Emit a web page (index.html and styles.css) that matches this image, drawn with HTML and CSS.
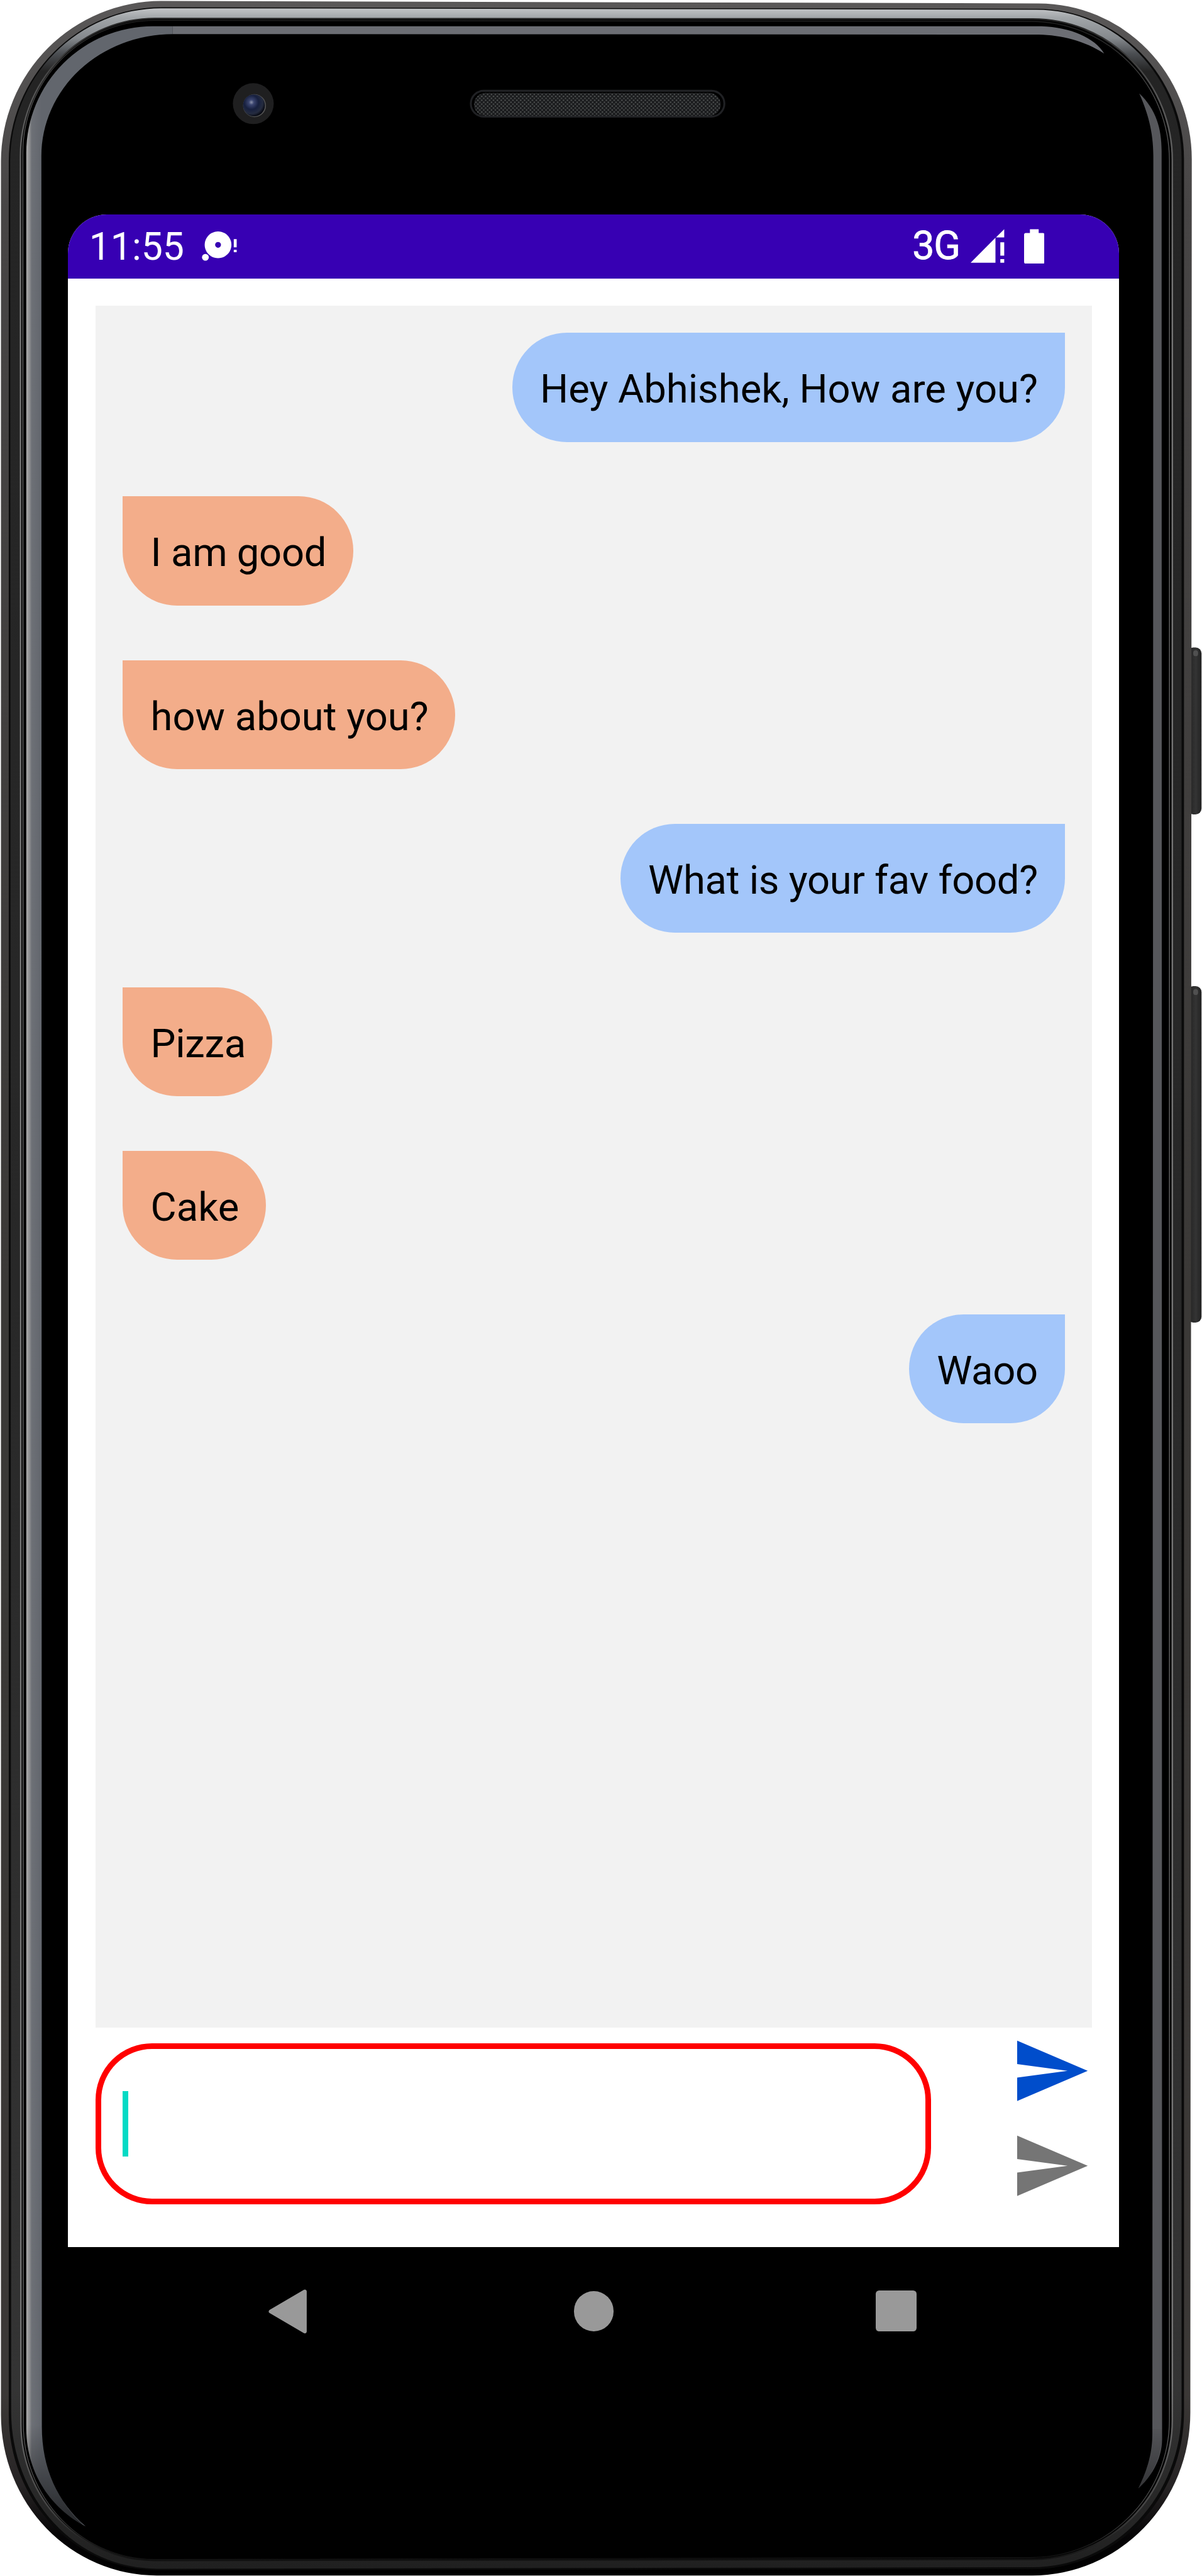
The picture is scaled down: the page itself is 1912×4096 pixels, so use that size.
FILE: index.html
```html
<!DOCTYPE html>
<html lang="en">
<head>
<meta charset="utf-8">
<title>Chat</title>
<link rel="stylesheet" href="styles.css">
</head>
<body>
<div class="phone">
  <svg class="frame" viewBox="0 0 2470 5292" preserveAspectRatio="none" aria-hidden="true">
    <defs>
      <linearGradient id="rim" gradientUnits="userSpaceOnUse" x1="0" y1="0" x2="0" y2="5292">
        <stop offset="0" stop-color="#5a5858"/><stop offset=".08" stop-color="#474545"/><stop offset=".5" stop-color="#3b3937"/><stop offset=".93" stop-color="#3b3836"/><stop offset=".965" stop-color="#262324"/><stop offset=".985" stop-color="#050405"/><stop offset="1" stop-color="#000"/>
      </linearGradient>
      <linearGradient id="bevel" gradientUnits="userSpaceOnUse" x1="0" y1="15" x2="0" y2="5280">
        <stop offset="0" stop-color="#c6c8ca"/><stop offset=".004" stop-color="#a2a6a9"/><stop offset=".012" stop-color="#85898d"/><stop offset=".018" stop-color="#4c4f53"/><stop offset=".025" stop-color="#242424"/><stop offset=".5" stop-color="#282828"/><stop offset=".93" stop-color="#343434"/><stop offset="1" stop-color="#202020"/>
      </linearGradient>
      <linearGradient id="hair" gradientUnits="userSpaceOnUse" x1="0" y1="36" x2="0" y2="5260">
        <stop offset="0" stop-color="#222"/><stop offset=".03" stop-color="#555"/><stop offset=".1" stop-color="#777"/><stop offset=".93" stop-color="#777"/><stop offset=".98" stop-color="#444"/><stop offset="1" stop-color="#111"/>
      </linearGradient>
      <linearGradient id="shineX" gradientUnits="userSpaceOnUse" x1="54" y1="0" x2="86" y2="0">
        <stop offset="0" stop-color="#aaa"/><stop offset=".2" stop-color="#8f9092"/><stop offset=".35" stop-color="#6d7076"/><stop offset="1" stop-color="#62666d"/>
      </linearGradient>
      <linearGradient id="fade" gradientUnits="userSpaceOnUse" x1="0" y1="4980" x2="0" y2="5195">
        <stop offset="0" stop-color="#000" stop-opacity="0"/><stop offset="1" stop-color="#000" stop-opacity=".65"/>
      </linearGradient>
      <linearGradient id="key" x1="0" y1="0" x2="1" y2="0">
        <stop offset="0" stop-color="#111"/><stop offset=".3" stop-color="#292929"/><stop offset=".6" stop-color="#343434"/><stop offset="1" stop-color="#202020"/>
      </linearGradient>
      <radialGradient id="lens" cx=".38" cy=".36" r=".65">
        <stop offset="0" stop-color="#8d94ad"/><stop offset=".18" stop-color="#3b4570"/><stop offset=".5" stop-color="#17203f"/><stop offset=".8" stop-color="#252c40"/><stop offset="1" stop-color="#090b14"/>
      </radialGradient>
      <pattern id="mesh" width="8" height="8" patternUnits="userSpaceOnUse">
        <rect width="8" height="8" fill="#1b1c1e"/><circle cx="2" cy="2" r="1.5" fill="#555857"/><circle cx="6" cy="6" r="1.5" fill="#555857"/>
      </pattern>
    </defs>
    <rect x="2440" y="1330" width="29" height="343" rx="12" fill="url(#key)"/>
    <rect x="2440" y="2026" width="29" height="691" rx="12" fill="url(#key)"/>
    <rect x="2452" y="1336" width="10" height="12" rx="5" fill="#505050"/>
    <rect x="2452" y="2032" width="10" height="12" rx="5" fill="#505050"/>
    <path fill="url(#rim)" d="M332 2L2134 7A315 320 0 0 1 2449 327L2446 4956A325 335 0 0 1 2121 5291L322 5291A320 330 0 0 1 2 4961L2 332A330 330 0 0 1 332 2Z"/>
    <path fill="#0a0a0a" d="M332 15L2130 18A303 309 0 0 1 2433 327L2433 4956A312 322 0 0 1 2121 5278L322 5280A304 319 0 0 1 18 4961L18 332A314 317 0 0 1 332 15Z"/>
    <path fill="url(#bevel)" d="M332 17L2130 20A298 307 0 0 1 2428 327L2428 4950A307 324 0 0 1 2121 5274L322 5277A299 322 0 0 1 23 4955L21 332A311 315 0 0 1 332 17Z"/>
    <path fill="#050505" stroke="url(#hair)" stroke-width="3" d="M318 38L2122 39A287 290 0 0 1 2409 329L2409 4972A290 286 0 0 1 2119 5258L318 5260A275 280 0 0 1 43 4980L42 320A276 282 0 0 1 318 38Z"/>
    <path fill="#000" stroke="url(#hair)" stroke-width="1.5" d="M318 42L2118 44A285 285 0 0 1 2403 329L2403 4972A285 282 0 0 1 2118 5254L318 5258A270 278 0 0 1 48 4980L47 314A271 272 0 0 1 318 42Z"/>
    <path fill="#6c6e74" d="M2140 54C2200 56 2250 78 2269 110C2230 84 2180 72 2135 71L355 70L355 54Z"/>
    <path fill="url(#shineX)" d="M355 54L314 54A260 260 0 0 0 54 314L54 4990C55 5085 108 5155 176 5190C118 5140 86 5070 86 4985L85 320A270 250 0 0 1 355 70Z"/>
    <path fill="url(#fade)" d="M52 4980L88 4980C86 5070 120 5145 180 5195L150 5195C108 5155 52 5085 52 4980Z"/>
    <path fill="#56575b" d="M2341 192C2376 225 2387 265 2387 310L2388 5010C2388 5055 2362 5092 2339 5112C2360 5070 2368 5035 2368 5000L2370 320C2370 270 2358 230 2341 192Z"/>
    <path fill="url(#fade)" d="M2366 4990L2389 4990C2389 5055 2362 5092 2337 5115C2360 5070 2367 5035 2366 4990Z"/>
    <circle cx="520.5" cy="213" r="42" fill="#1f1f20"/>
    <circle cx="523" cy="217" r="23.500" fill="#555"/>
    <circle cx="522" cy="216.500" r="22.500" fill="url(#lens)"/>
    <rect x="967.500" y="186.500" width="521" height="53" rx="26.500" fill="#000" stroke="#202124" stroke-width="4"/>
    <rect x="974" y="191" width="507" height="47" rx="23.500" fill="url(#mesh)"/>
  </svg>

  <main class="screen">
    <header class="status">
      <span class="clock">11:55</span>
      <svg class="note" viewBox="0 0 78 64"><g fill="#fff"><path fill-rule="evenodd" d="M34.700 1.300a27.500 27.500 0 1 0 .01 0ZM34.700 22.800a6 6 0 1 1-.01 0Z"/><circle cx="8.700" cy="54.800" r="8.500" fill="#3700b3"/><circle cx="8.700" cy="54.500" r="7"/><path d="M67 17h6v17h-6zM67 39h6v5h-6z"/></g></svg>
      <span class="network">3G</span>
      <svg class="signal" viewBox="0 0 70 70"><path fill="#fff" d="M0 69.500L51 18V69.500ZM52 17.500L69 .5V17.500ZM61 27.500h8V55h-8zM61 62h8v7.500h-8z"/></svg>
      <svg class="battery" viewBox="0 0 42 72"><path fill="#fff" d="M12 0.500H30V8.500H38.500Q42 8.500 42 12V68Q42 71.500 38.500 71.500H3.500Q0 71.500 0 68V12Q0 8.500 3.500 8.500H12Z"/></svg>
    </header>
    <section class="messages">
      <p class="bubble sent">Hey Abhishek, How are you?</p>
      <p class="bubble received tight">I am good</p>
      <p class="bubble received">how about you?</p>
      <p class="bubble sent tight">What is your fav food?</p>
      <p class="bubble received tight">Pizza</p>
      <p class="bubble received">Cake</p>
      <p class="bubble sent tight">Waoo</p>
    </section>
    <footer class="composer">
      <div class="input"><span class="caret"></span></div>
      <div class="actions">
        <svg class="send" viewBox="2 3 21 18"><path fill="#004dcb" d="M2 21L23 12L2 3V10L17 12L2 14Z"/></svg>
        <svg class="send" viewBox="2 3 21 18"><path fill="#757575" d="M2 21L23 12L2 3V10L17 12L2 14Z"/></svg>
      </div>
    </footer>
  </main>

  <nav class="nav">
    <svg class="back" viewBox="0 0 82 94"><path fill="#999" stroke="#999" stroke-width="8" stroke-linejoin="round" d="M6 47L76 6V88Z"/></svg>
    <span class="home"></span>
    <span class="recents"></span>
  </nav>
</div>
</body>
</html>
```

FILE: styles.css
```css
/* 1rem is one hundred device units of the handset drawing */
html { font-size: 77.4px; }
body { margin: 0; background: #fff; font-family: Roboto, sans-serif; }
* { box-sizing: border-box; }
svg { display: block; flex: none; }

.phone {
  position: relative;
  width: 1912px;
  height: 4096px;
  padding: 4.4rem 0 0 1.4rem;
  overflow: hidden;
}
.frame { position: absolute; inset: 0; width: 100%; height: 100%; }

.screen {
  position: relative;
  display: flex;
  flex-direction: column;
  width: 21.6rem;
  height: 41.76rem;
  background: #fff;
  border-radius: .8rem .8rem 0 0;
  overflow: hidden;
}

.status {
  display: flex;
  align-items: flex-start;
  flex: none;
  height: 1.32rem;
  padding: 0 1.54rem 0 .43rem;
  background: #3700b3;
  color: #fff;
}
.clock { font-size: .785rem; line-height: 1rem; margin-top: .18rem; width: 2.3rem; white-space: nowrap; }
.note { width: .78rem; height: .64rem; margin-top: .345rem; }
.network {
  margin: .145rem .225rem 0 auto;
  font-size: .81rem;
  line-height: 1rem;
  letter-spacing: -.02em;
  -webkit-text-stroke: .01rem #fff;
}
.signal { width: .7rem; height: .7rem; margin: .305rem .39rem 0 0; }
.battery { width: .42rem; height: .72rem; margin-top: .3rem; }

.messages {
  display: flex;
  flex-direction: column;
  gap: 1.12rem;
  flex: none;
  height: 35.38rem;
  margin: .56rem .56rem 0;
  padding: .56rem;
  background: #f2f2f2;
}
.bubble {
  flex: none;
  height: 2.24rem;
  margin: 0;
  padding: 0 .55rem 0 .575rem;
  color: #000;
  font-size: .818rem;
  line-height: 2.3rem;
  white-space: nowrap;
}
.tight { letter-spacing: -.004em; }
.sent { align-self: flex-end; background: #a3c6fa; border-radius: 1.12rem 0 1.12rem 1.12rem; }
.received { align-self: flex-start; background: #f3ad8a; border-radius: 0 1.12rem 1.12rem 1.12rem; }

.composer {
  display: flex;
  justify-content: space-between;
  padding: .25rem .64rem 0 .56rem;
}
.input {
  display: flex;
  align-items: center;
  width: 17.18rem;
  height: 3.3rem;
  margin-top: .07rem;
  padding-left: .44rem;
  border: .12rem solid #f00;
  border-radius: 1.16rem;
}
.caret { width: .12rem; height: 1.34rem; background: #03dac5; }
.actions { display: flex; flex-direction: column; gap: .7rem; }
.send { width: 1.45rem; height: 1.26rem; }

.nav {
  position: relative;
  display: flex;
  align-items: center;
  margin: .85rem 0 0 4.11rem;
}
.back { width: .82rem; height: .94rem; }
.home { width: .82rem; height: .82rem; margin: 0 5.39rem 0 5.46rem; border-radius: 50%; background: #999; }
.recents { width: .84rem; height: .84rem; border-radius: .07rem; background: #999; }
```
